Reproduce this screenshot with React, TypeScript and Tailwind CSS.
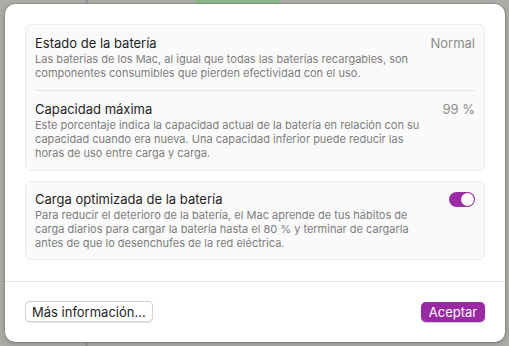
import React from "react";

const font = { fontFamily: "Inter, 'Noto Sans', 'Liberation Sans', sans-serif" };

function Row({ title, value, desc, toggle }: { title: string; value?: string; desc: string[]; toggle?: boolean }) {
  return (
    <div className="flex flex-col">
      <div className="flex items-center justify-between h-[16px]">
        <span className="text-[13px] leading-[16px] text-[#1f1f1f]">{title}</span>
        {value && <span className="text-[13px] leading-[16px] text-[#8b8b8b]">{value}</span>}
        {toggle && (
          <div className="w-[26px] h-[15px] rounded-full bg-[#9b2ba6] flex items-center justify-end pr-[1px]">
            <div className="w-[13px] h-[13px] rounded-full bg-white shadow-[0_0_1px_rgba(0,0,0,0.3)]" />
          </div>
        )}
      </div>
      <div className="mt-[1px] text-[11px] leading-[14px] text-[#7d7d7d]">
        {desc.map((d, i) => (
          <div key={i}>{d}</div>
        ))}
      </div>
    </div>
  );
}

export default function App() {
  return (
    <div className="w-[509px] h-[346px] bg-[#aeaca7] relative overflow-hidden" style={font}>
      <div className="absolute left-[195px] top-0 w-[85px] h-[4px] bg-[#8fb58a]" />
      <div className="absolute left-[85px] top-0 w-[3px] h-[346px] bg-[#9c9a96]" />
      <div className="absolute left-[5px] top-[4px] w-[500px] h-[338px] bg-white rounded-[10px] shadow-[0_0_0_0.5px_rgba(0,0,0,0.25),0_2px_6px_rgba(0,0,0,0.2)] flex flex-col">
        <div className="px-[20px] pt-[20px] pb-[21px] flex flex-col gap-[10px]">
          <div className="rounded-[6px] border border-[#ebebeb] bg-[#fafafa] px-[9px] pt-[10px] pb-[10px] flex flex-col">
            <Row
              title="Estado de la batería"
              value="Normal"
              desc={[
                "Las baterías de los Mac, al igual que todas las baterías recargables, son",
                "componentes consumibles que pierden efectividad con el uso.",
              ]}
            />
            <div className="h-px bg-[#e6e6e6] mt-[10px] mb-[10px]" />
            <Row
              title="Capacidad máxima"
              value="99 %"
              desc={[
                "Este porcentaje indica la capacidad actual de la batería en relación con su",
                "capacidad cuando era nueva. Una capacidad inferior puede reducir las",
                "horas de uso entre carga y carga.",
              ]}
            />
          </div>
          <div className="rounded-[6px] border border-[#ebebeb] bg-[#fafafa] px-[9px] pt-[9px] pb-[9px] flex flex-col">
            <Row
              title="Carga optimizada de la batería"
              toggle
              desc={[
                "Para reducir el deterioro de la batería, el Mac aprende de tus hábitos de",
                "carga diarios para cargar la batería hasta el 80 % y terminar de cargarla",
                "antes de que lo desenchufes de la red eléctrica.",
              ]}
            />
          </div>
        </div>
        <div className="h-px bg-[#e3e3e3]" />
        <div className="flex items-center justify-between px-[20px] pt-[19px]">
          <button className="h-[21px] px-[6px] rounded-[5px] bg-white border border-[#d4d4d4] shadow-[0_0.5px_1px_rgba(0,0,0,0.12)] text-[13px] leading-[16px] text-[#1f1f1f]">
            Más información...
          </button>
          <button className="h-[20px] w-[64px] rounded-[5px] bg-[#9a2aa3] text-[13px] leading-[16px] text-white shadow-[0_0.5px_1px_rgba(0,0,0,0.2)]">
            Aceptar
          </button>
        </div>
      </div>
    </div>
  );
}
